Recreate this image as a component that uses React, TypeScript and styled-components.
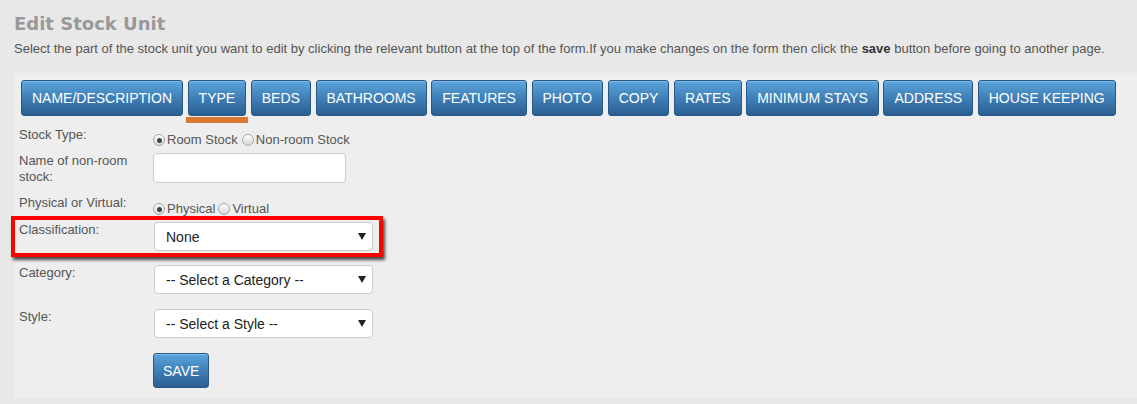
import React, { FunctionComponent } from 'react';
import styled, { createGlobalStyle } from 'styled-components';

const GlobalStyle = createGlobalStyle`
  html, body {
    margin: 0;
    padding: 0;
  }
  body {
    background: #e8e8e8;
    font-family: 'Liberation Sans', Arial, sans-serif;
    color: #555;
  }
`;

const PageWrapper = styled.div`
  width: 1137px;
  height: 404px;
  overflow: hidden;
  padding-left: 14px;
  box-sizing: border-box;
`;

const Title = styled.h1`
  margin: 12.5px 0 0;
  font-family: 'DejaVu Sans', Verdana, sans-serif;
  font-size: 18px;
  line-height: 22px;
  font-weight: bold;
  color: #999;
`;

const Intro = styled.p`
  margin: 6.5px 0 0;
  font-size: 13px;
  line-height: 16px;
  color: #555;

  b {
    color: #333;
  }
`;

const FormPanel = styled.div`
  margin-top: 16px;
  height: 325px;
  background: #eeeeee;
  padding: 7px 0 0 5px;
  box-sizing: border-box;
`;

const TabBar = styled.div`
  display: flex;
  gap: 4.6px;
  padding-left: 2px;
`;

const TabItem = styled.div`
  display: flex;
  flex-direction: column;
`;

const BlueButton = styled.button`
  height: 36px;
  padding: 0 10px;
  border: 1px solid #2a5885;
  border-radius: 3px;
  background: linear-gradient(to bottom, #5ca5dc 0%, #3f7fb8 50%, #2b5e90 100%);
  box-shadow: inset 0 1px 0 rgba(255, 255, 255, 0.25);
  color: #fff;
  font-family: 'Liberation Sans', Arial, sans-serif;
  font-size: 14px;
  text-transform: uppercase;
  white-space: nowrap;
  cursor: pointer;
`;

const ActiveMark = styled.div<{ $active: boolean }>`
  height: 6px;
  margin: 1px -2px 0;
  background: ${p => (p.$active ? '#d97a30' : 'transparent')};
`;

const FormBody = styled.div`
  margin-top: 4px;
`;

const Row = styled.div<{ $gap: number; $highlight?: boolean }>`
  position: relative;
  display: grid;
  grid-template-columns: 134px max-content;
  width: max-content;
  margin-bottom: ${p => p.$gap}px;

  ${p =>
    p.$highlight &&
    `
    &::after {
      content: '';
      position: absolute;
      top: -6px;
      left: -8px;
      right: -10px;
      bottom: -6px;
      border: 4px solid #ff0000;
      box-shadow: 2px 3px 3px rgba(0, 0, 0, 0.7);
      pointer-events: none;
    }
  `}
`;

const Label = styled.label`
  font-size: 13px;
  line-height: 16px;
  color: #555;
  width: 120px;
`;

const RadioGroup = styled.div<{ $offset: number }>`
  display: flex;
  align-items: center;
  padding-top: ${p => p.$offset}px;
  font-size: 13px;
  line-height: 16px;
  color: #555;
`;

const RadioDot = styled.span<{ $checked: boolean }>`
  position: relative;
  display: inline-block;
  width: 12px;
  height: 12px;
  border: 1px solid #a6a6a6;
  border-radius: 50%;
  background: linear-gradient(to bottom, #ffffff, #d8d8d8);
  margin-right: 2px;
  box-sizing: border-box;

  ${p =>
    p.$checked &&
    `
    &::after {
      content: '';
      position: absolute;
      top: 2.5px;
      left: 2.5px;
      width: 5px;
      height: 5px;
      border-radius: 50%;
      background: #444;
    }
  `}
`;

const RadioText = styled.span<{ $space: number }>`
  margin-right: ${p => p.$space}px;
`;

const TextInput = styled.input`
  width: 193px;
  height: 30px;
  box-sizing: border-box;
  border: 1px solid #ccc;
  border-radius: 4px;
  background: #fff;
  outline: none;
`;

const SelectBox = styled.div`
  display: flex;
  align-items: center;
  justify-content: space-between;
  width: 219px;
  height: 29px;
  margin-left: 1px;
  padding: 0 6px 0 11px;
  box-sizing: border-box;
  border: 1px solid #ccc;
  border-radius: 4px;
  background: #fff;
  font-size: 14px;
  color: #222;
`;

const SaveRow = styled.div`
  padding-left: 134px;
`;

const SaveButton = styled(BlueButton)`
  height: 35px;
  padding: 0 9px;
`;

const tabs = [
  'Name/Description',
  'Type',
  'Beds',
  'Bathrooms',
  'Features',
  'Photo',
  'Copy',
  'Rates',
  'Minimum Stays',
  'Address',
  'House Keeping',
];

const Arrow = () => (
  <svg width="8" height="7" viewBox="0 0 8 7">
    <path d="M0 0 L8 0 L4 7 Z" fill="#222" />
  </svg>
);

type RadioProps = { checked: boolean; label: string; space?: number };

const Radio: FunctionComponent<RadioProps> = ({ checked, label, space = 0 }) => (
  <>
    <RadioDot $checked={checked} />
    <RadioText $space={space}>{label}</RadioText>
  </>
);

type SelectProps = { value: string };

const FakeSelect: FunctionComponent<SelectProps> = ({ value }) => (
  <SelectBox>
    <span>{value}</span>
    <Arrow />
  </SelectBox>
);

const App: FunctionComponent = () => {
  return (
    <PageWrapper>
      <GlobalStyle />
      <Title>Edit Stock Unit</Title>
      <Intro>
        Select the part of the stock unit you want to edit by clicking the relevant button at the top of the
        form.If you make changes on the form then click the <b>save</b> button before going to another page.
      </Intro>
      <FormPanel>
        <TabBar>
          {tabs.map(t => (
            <TabItem key={t}>
              <BlueButton>{t}</BlueButton>
              <ActiveMark $active={t === 'Type'} />
            </TabItem>
          ))}
        </TabBar>
        <FormBody>
          <Row $gap={5}>
            <Label>Stock Type:</Label>
            <RadioGroup $offset={5}>
              <Radio checked label="Room Stock" space={4} />
              <Radio checked={false} label=" Non-room Stock" />
            </RadioGroup>
          </Row>
          <Row $gap={10}>
            <Label>Name of non-room stock:</Label>
            <TextInput type="text" />
          </Row>
          <Row $gap={5}>
            <Label>Physical or Virtual:</Label>
            <RadioGroup $offset={6}>
              <Radio checked label="Physical" space={3} />
              <Radio checked={false} label="Virtual" />
            </RadioGroup>
          </Row>
          <Row $gap={14} $highlight>
            <Label>Classification:</Label>
            <FakeSelect value="None" />
          </Row>
          <Row $gap={15}>
            <Label>Category:</Label>
            <FakeSelect value="-- Select a Category --" />
          </Row>
          <Row $gap={15}>
            <Label>Style:</Label>
            <FakeSelect value="-- Select a Style --" />
          </Row>
          <SaveRow>
            <SaveButton>Save</SaveButton>
          </SaveRow>
        </FormBody>
      </FormPanel>
    </PageWrapper>
  );
};

export default App;
